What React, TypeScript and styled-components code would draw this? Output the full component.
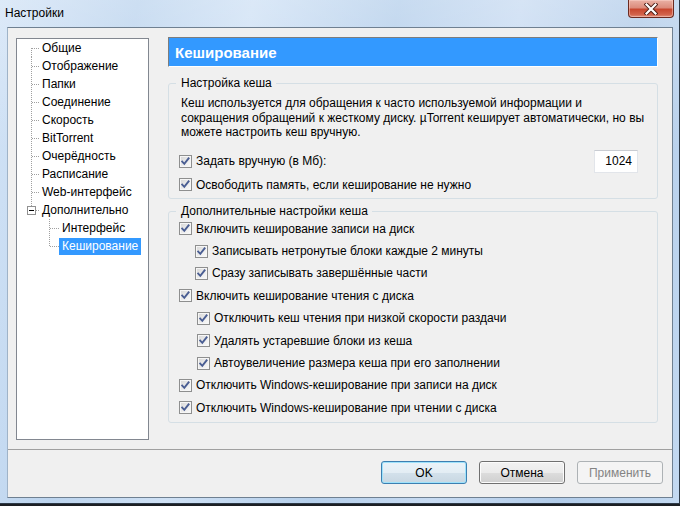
import React from 'react';
import styled, { createGlobalStyle } from 'styled-components';

const Global = createGlobalStyle`
  html, body { margin: 0; padding: 0; background: #1c1f24; }
  body {
    font-family: "Liberation Sans", Arial, sans-serif;
    font-size: 12px;
    color: #000;
  }
  * { box-sizing: border-box; }
`;

const Window = styled.div`
  width: 680px;
  height: 504px;
  display: flex;
  flex-direction: column;
  padding: 0 6px 5px 7px;
  border-right: 1px solid #2d3a48;
  border-bottom: 1px solid #2d3a48;
  background:
    linear-gradient(180deg, rgba(255,255,255,0.25) 0%, rgba(255,255,255,0) 30%),
    linear-gradient(100deg, #d2e3f6 0%, #bcd4ee 18%, #cfe1f5 33%, #b5cfeb 52%, #c8dbf2 68%, #b2cce9 84%, #c3d9f1 100%);
`;

const TitleBar = styled.div`
  height: 27px;
  flex: none;
  display: flex;
  align-items: flex-start;
  justify-content: space-between;
  margin-left: -2px;
`;

const Title = styled.div`
  padding-top: 6px;
  line-height: 15px;
  color: #000;
`;

const CloseButton = styled.div`
  width: 46px;
  height: 18px;
  margin-right: -1px;
  border: 1px solid #6b2a20;
  border-top: none;
  border-radius: 0 0 4px 4px;
  background: linear-gradient(180deg, #eab1a5 0%, #dc8c7c 45%, #c8472f 55%, #d2624a 85%, #e2907c 100%);
  box-shadow: inset 0 0 0 1px rgba(255, 220, 210, 0.45);
  display: flex;
  align-items: center;
  justify-content: center;
`;

const Client = styled.div`
  flex: 1;
  display: flex;
  flex-direction: column;
  background: #f0f0f0;
  border: 1px solid #6f8091;
  border-left-color: #9fb3c8;
`;

const Main = styled.div`
  flex: 1;
  display: flex;
  align-items: flex-start;
  gap: 19px;
  padding: 9px 14px 0 8px;
`;

const Tree = styled.div`
  width: 133px;
  height: 402px;
  margin-top: 1px;
  flex: none;
  background: #fff;
  border: 1px solid #828790;
  display: flex;
  flex-direction: column;
`;

const TreeRow = styled.div`
  height: 18px;
  display: flex;
  align-items: center;
`;

const TreeLabel = styled.span<{ $selected?: boolean }>`
  height: 17px;
  line-height: 17px;
  padding: 0 3px;
  white-space: nowrap;
  background: ${(p) => (p.$selected ? '#3399ff' : 'transparent')};
  color: ${(p) => (p.$selected ? '#fff' : '#000')};
`;

const Panel = styled.div`
  width: 490px;
  flex: none;
  display: flex;
  flex-direction: column;
`;

const Header = styled.div`
  height: 30px;
  display: flex;
  align-items: center;
  padding-left: 6px;
  background: #3399ff;
  border: 1px solid #fff;
  border-top-color: #7d7d7d;
  border-left-color: #7d7d7d;
  color: #fff;
  font-weight: bold;
  font-size: 15px;
`;

const Group = styled.fieldset<{ $top: number; $bottom: number }>`
  margin: ${(p) => p.$top}px 0 0 0;
  padding: 0 10px ${(p) => p.$bottom}px 10px;
  min-width: 0;
  border: 1px solid #d5dfe5;
  border-radius: 3px;
`;

const Legend = styled.legend`
  margin-left: -3px;
  padding: 0 4px 0 5px;
  line-height: 15px;
  color: #000;
`;

const Para = styled.div`
  margin: 5px 0 0 2px;
  line-height: 14.5px;
  white-space: nowrap;
`;

const Row = styled.div<{ $h: number; $indent?: number }>`
  height: ${(p) => p.$h}px;
  display: flex;
  align-items: center;
  gap: 4px;
  padding-left: ${(p) => p.$indent || 0}px;
  white-space: nowrap;
`;

const RowList = styled.div`
  display: flex;
  flex-direction: column;
  margin-top: -1px;
`;

const Spacer = styled.div`
  flex: 1;
`;

const Box = styled.span`
  width: 13px;
  height: 13px;
  flex: none;
  border: 1px solid #8e8f8f;
  background: linear-gradient(135deg, #d6d6d6 0%, #ececec 55%, #fbfbfb 100%);
  box-shadow: inset 0 0 0 1px #f6f6f6;
  display: flex;
  align-items: center;
  justify-content: center;
`;

const NumInput = styled.div`
  width: 44px;
  height: 23px;
  margin-right: 9px;
  background: #fff;
  border: 1px solid #e2e5ea;
  border-top-color: #c9ccd2;
  display: flex;
  align-items: center;
  justify-content: flex-end;
  padding-right: 5px;
`;

const Footer = styled.div`
  height: 48px;
  flex: none;
  border-top: 1px solid #a0a0a0;
  display: flex;
  justify-content: flex-end;
  align-items: flex-start;
  gap: 12px;
  padding: 11px 9px 0 0;
`;

const Button = styled.div<{ $variant?: 'default' | 'disabled' }>`
  width: 86px;
  height: 23px;
  border-radius: 3px;
  display: flex;
  align-items: center;
  justify-content: center;
  border: 1px solid
    ${(p) => (p.$variant === 'default' ? '#3c7fb1' : p.$variant === 'disabled' ? '#adb2b5' : '#707070')};
  color: ${(p) => (p.$variant === 'disabled' ? '#838383' : '#000')};
  background: ${(p) =>
    p.$variant === 'disabled'
      ? '#f4f4f4'
      : p.$variant === 'default'
      ? 'linear-gradient(180deg, #eaf3f9 0%, #e3edf4 50%, #d3e1eb 51%, #c8d7e2 100%)'
      : 'linear-gradient(180deg, #f2f2f2 0%, #ebebeb 50%, #dddddd 51%, #cfcfcf 100%)'};
  box-shadow: ${(p) =>
    p.$variant === 'default'
      ? 'inset 0 0 0 1px #9ee2fb'
      : p.$variant === 'disabled'
      ? 'none'
      : 'inset 0 0 0 1px #fcfcfc'};
`;

const Check = () => (
  <Box>
    <svg width="11" height="11" viewBox="0 0 11 11">
      <path d="M2.2 5.6 L4.3 7.9 L8.6 2.4" fill="none" stroke="#4a5e93" strokeWidth="1.9" strokeLinecap="square" strokeLinejoin="miter" />
    </svg>
  </Box>
);

const CheckRow = ({ label, indent, h }: { label: string; indent?: number; h: number }) => (
  <Row $h={h} $indent={indent}>
    <Check />
    <span>{label}</span>
  </Row>
);

const DOT = '#a0a0a0';

type Kind = 'first' | 'mid' | 'lastExpanded' | 'childMid' | 'childLast';

const Connector = ({ kind }: { kind: Kind }) => {
  if (kind === 'childMid' || kind === 'childLast') {
    return (
      <svg width="42" height="18" style={{ flex: 'none' }} shapeRendering="crispEdges">
        <line x1="32.5" y1="0" x2="32.5" y2={kind === 'childMid' ? 18 : 10} stroke={DOT} strokeDasharray="1 1" />
        <line x1="33" y1="9.5" x2="42" y2="9.5" stroke={DOT} strokeDasharray="1 1" />
      </svg>
    );
  }
  if (kind === 'lastExpanded') {
    return (
      <svg width="22" height="18" style={{ flex: 'none' }} shapeRendering="crispEdges">
        <line x1="14.5" y1="0" x2="14.5" y2="5" stroke={DOT} strokeDasharray="1 1" />
        <rect x="10.5" y="5.5" width="8" height="8" fill="#fff" stroke="#919191" />
        <line x1="12" y1="9.5" x2="17" y2="9.5" stroke="#000" />
        <line x1="19" y1="9.5" x2="22" y2="9.5" stroke={DOT} strokeDasharray="1 1" />
      </svg>
    );
  }
  return (
    <svg width="22" height="18" style={{ flex: 'none' }} shapeRendering="crispEdges">
      <line x1="14.5" y1={kind === 'first' ? 9 : 0} x2="14.5" y2="18" stroke={DOT} strokeDasharray="1 1" />
      <line x1="15" y1="9.5" x2="22" y2="9.5" stroke={DOT} strokeDasharray="1 1" />
    </svg>
  );
};

const treeItems: { label: string; kind: Kind; selected?: boolean }[] = [
  { label: 'Общие', kind: 'first' },
  { label: 'Отображение', kind: 'mid' },
  { label: 'Папки', kind: 'mid' },
  { label: 'Соединение', kind: 'mid' },
  { label: 'Скорость', kind: 'mid' },
  { label: 'BitTorrent', kind: 'mid' },
  { label: 'Очерёдность', kind: 'mid' },
  { label: 'Расписание', kind: 'mid' },
  { label: 'Web-интерфейс', kind: 'mid' },
  { label: 'Дополнительно', kind: 'lastExpanded' },
  { label: 'Интерфейс', kind: 'childMid' },
  { label: 'Кеширование', kind: 'childLast', selected: true },
];

const advanced: { label: string; indent?: number }[] = [
  { label: 'Включить кеширование записи на диск' },
  { label: 'Записывать нетронутые блоки каждые 2 минуты', indent: 16 },
  { label: 'Сразу записывать завершённые части', indent: 16 },
  { label: 'Включить кеширование чтения с диска' },
  { label: 'Отключить кеш чтения при низкой скорости раздачи', indent: 18 },
  { label: 'Удалять устаревшие блоки из кеша', indent: 18 },
  { label: 'Автоувеличение размера кеша при его заполнении', indent: 18 },
  { label: 'Отключить Windows-кеширование при записи на диск' },
  { label: 'Отключить Windows-кеширование при чтении с диска' },
];

export default function App() {
  return (
    <>
      <Global />
      <Window>
        <TitleBar>
          <Title>Настройки</Title>
          <CloseButton>
            <svg width="14" height="12" viewBox="0 0 14 12">
              <path d="M2.5 1.5 L11.5 10.5 M11.5 1.5 L2.5 10.5" stroke="#4a1c14" strokeWidth="4" strokeLinecap="square" />
              <path d="M2.5 1.5 L11.5 10.5 M11.5 1.5 L2.5 10.5" stroke="#ffffff" strokeWidth="2.2" strokeLinecap="square" />
            </svg>
          </CloseButton>
        </TitleBar>
        <Client>
          <Main>
            <Tree>
              {treeItems.map((t) => (
                <TreeRow key={t.label}>
                  <Connector kind={t.kind} />
                  <TreeLabel $selected={t.selected}>{t.label}</TreeLabel>
                </TreeRow>
              ))}
            </Tree>
            <Panel>
              <Header>Кеширование</Header>
              <Group $top={9} $bottom={2}>
                <Legend>Настройка кеша</Legend>
                <Para>
                  Кеш используется для обращения к часто используемой информации и
                  <br />
                  сокращения обращений к жесткому диску. µTorrent кеширует автоматически, но вы
                  <br />
                  можете настроить кеш вручную.
                </Para>
                <Row $h={23} style={{ marginTop: 10 }}>
                  <Check />
                  <span>Задать вручную (в Мб):</span>
                  <Spacer />
                  <NumInput>1024</NumInput>
                </Row>
                <Row $h={22} style={{ marginTop: 1 }}>
                  <Check />
                  <span>Освободить память, если кеширование не нужно</span>
                </Row>
              </Group>
              <Group $top={5} $bottom={3}>
                <Legend>Дополнительные настройки кеша</Legend>
                <RowList>
                  {advanced.map((a) => (
                    <CheckRow key={a.label} label={a.label} indent={a.indent} h={22.4} />
                  ))}
                </RowList>
              </Group>
            </Panel>
          </Main>
          <Footer>
            <Button $variant="default">OK</Button>
            <Button>Отмена</Button>
            <Button $variant="disabled">Применить</Button>
          </Footer>
        </Client>
      </Window>
    </>
  );
}
